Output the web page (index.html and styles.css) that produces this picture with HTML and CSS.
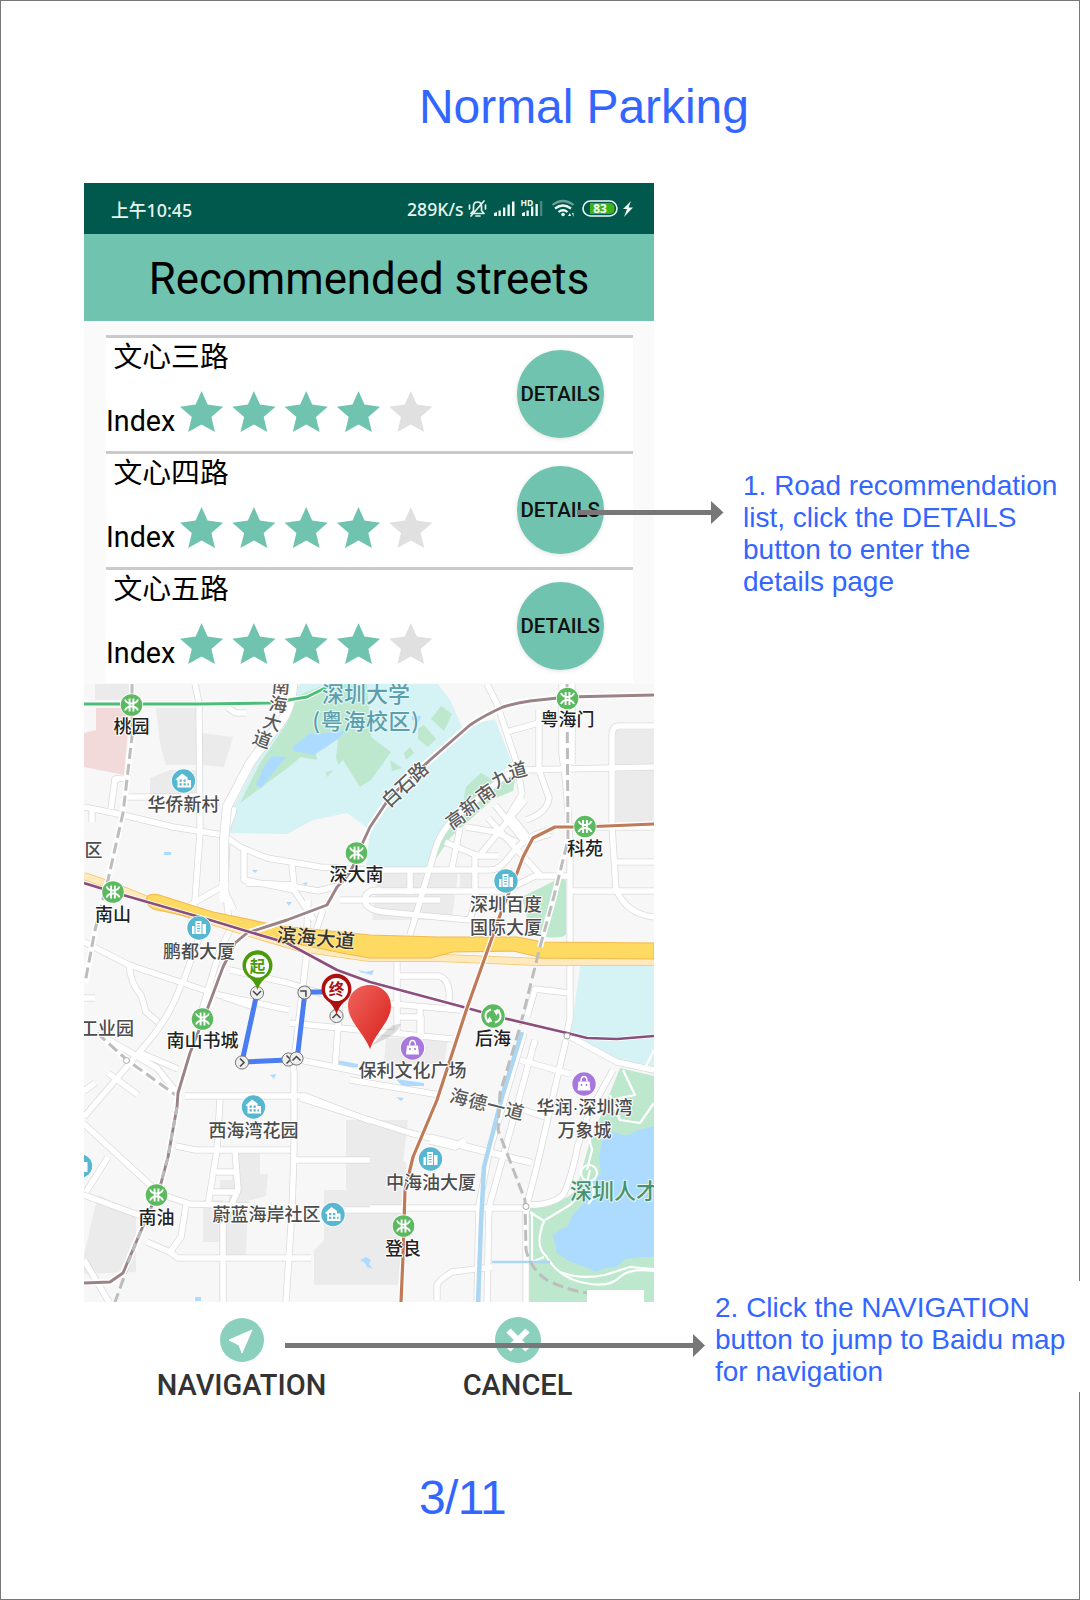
FILE: index.html
```html
<!DOCTYPE html>
<html lang="en">
<head>
<meta charset="utf-8">
<title>Normal Parking</title>
<link rel="stylesheet" href="styles.css">
</head>
<body>
<main class="page">
  <h1 class="title">Normal Parking</h1>

  <section class="phone">
    <div class="status">
      <span class="clock">上午10:45</span>
      <span class="speed">289K/s</span>
      <svg class="status-icons" width="170" height="24" viewBox="466 197 170 24">
        <g fill="none" stroke="#e2f1ea" stroke-width="1.7" stroke-linecap="round" stroke-linejoin="round">
          <path d="M471 213.500h13l-2.500-3v-4q0-4.500-4-4.500t-4 4.500v4zM476 216h4M471 216l13-15M469.500 205v4M485.500 205v4"/>
        </g>
        <g fill="#f0faf5">
          <path d="M494 216v-3l3-1v4zM498.500 216v-5.500h2.300v5.500zM503 216v-8.500h2.300v8.500zM507.500 216v-11.500h2.300v11.500zM512 216v-14.500h2.500v14.500z"/>
          <path d="M522 216v-3l3-1v4zM526.500 216v-5.500h2.300v5.500zM531 216v-9.500h2.300v9.500zM535.500 216v-12h2.300v12z"/>
          <path d="M540 216v-15h2.300v15z" opacity=".3"/>
          <text x="520.500" y="205.500" class="hd">HD</text>
          <circle cx="563" cy="214.500" r="1.800"/>
          <path d="M568 216l2-3 1 3zM572 213h1.500v4z"/>
          <path d="M631 201l-8 8h4l-3 8 9-9.500h-4.500z"/>
        </g>
        <g fill="none" stroke="#f0faf5" stroke-width="2.200">
          <path d="M552.500 205q10.500-8 21 0" opacity=".45"/>
          <path d="M555 208.500q8-6 16 0M558.500 212q4.500-3.500 9 0"/>
        </g>
        <rect x="583" y="201" width="34" height="15" rx="7.500" fill="none" stroke="#f0faf5" stroke-width="1.600"/>
        <path d="M590 203h19q5.500 0 5.500 5.500t-5.500 5.500h-19z" fill="#3cb419"/>
        <text x="600" y="213" class="battery">83</text>
      </svg>
    </div>
    <h2 class="header">Recommended streets</h2>

    <div class="list">
      <article class="row">
        <div class="info">
          <div class="street">文心三路</div>
          <div class="rating"><span>Index</span>
            <svg class="stars" width="252" height="42" viewBox="0 0 252 42"><use href="#star"/><use href="#star" x="52.300"/><use href="#star" x="104.600"/><use href="#star" x="156.900"/><use href="#star" x="209.200" class="off"/></svg>
          </div>
        </div>
        <button class="details">DETAILS</button>
      </article>
      <article class="row">
        <div class="info">
          <div class="street">文心四路</div>
          <div class="rating"><span>Index</span>
            <svg class="stars" width="252" height="42" viewBox="0 0 252 42"><use href="#star"/><use href="#star" x="52.300"/><use href="#star" x="104.600"/><use href="#star" x="156.900"/><use href="#star" x="209.200" class="off"/></svg>
          </div>
        </div>
        <button class="details">DETAILS</button>
      </article>
      <article class="row">
        <div class="info">
          <div class="street">文心五路</div>
          <div class="rating"><span>Index</span>
            <svg class="stars" width="252" height="42" viewBox="0 0 252 42"><use href="#star"/><use href="#star" x="52.300"/><use href="#star" x="104.600"/><use href="#star" x="156.900"/><use href="#star" x="209.200" class="off"/></svg>
          </div>
        </div>
        <button class="details">DETAILS</button>
      </article>
    </div>

    <svg class="map" width="570" height="618" viewBox="84 684 570 618">
      <defs>
        <path id="star" d="M21.600 0L27.600 13.600 43.200 15.800 31.400 26 35 41 21.600 33.400 8.200 41 11.800 26 0 15.800 15.600 13.600z"/>
        <g id="metro">
          <circle r="11.500" fill="#fff"/><circle r="10.800" fill="#5bb960"/>
          <path d="M-6.500-5.500Q-5-1.500 0-1.500T6.500-5.500M-6.500 5.500Q-5 1.500 0 1.500T6.500 5.500M-1.900-6.500v13M1.900-6.500v13" fill="none" stroke="#fff" stroke-width="1.900"/>
        </g>
        <g id="house">
          <circle r="12.500" fill="#fff"/><circle r="11.700" fill="#57b7d0"/>
          <path d="M-8-1.500l6.500-6 5.500 4v2.500h3.500v7.500H-6v-7z" fill="#fff"/>
          <path d="M-4-1.500h2.300v2.300H-4zM0-1.500h2.300v2.300H0zM-4 2.300h2.300v2.300H-4zM0 2.300h2.300v2.300H0zM4 2.300h1.500v2.300H4z" fill="#57b7d0"/>
        </g>
        <g id="tower">
          <circle r="12.500" fill="#fff"/><circle r="11.700" fill="#57b7d0"/>
          <path d="M-7 6v-8h2.500v8zM-3.500 6V-7h6V6zM3.500 6v-10H7V6z" fill="#fff"/>
          <path d="M-2-4.500h3.200M-2-2h3.200M-2 .500h3.200M-2 3h3.200" stroke="#57b7d0"/>
        </g>
        <g id="shop">
          <circle r="12.500" fill="#fff"/><circle r="11.700" fill="#a777dc"/>
          <path d="M-5.500-2.500h11L6.500 6.500h-13z" fill="#fff"/><path d="M-3-2.500q0-5 3-5t3 5" fill="none" stroke="#fff" stroke-width="1.500"/>
          <circle cx="-2.500" cy="1" r="1" fill="#a777dc"/><circle cx="2.500" cy="1" r="1" fill="#a777dc"/>
        </g>
        <g id="turn">
          <circle r="6.600" fill="#eee" stroke="#777" stroke-width="1"/>
          <path d="M-4 2l4-4 4 4" fill="none" stroke="#444" stroke-width="1.500"/>
        </g>
        <g id="network">
          <path d="M84 807l39 8 50 12 50 8 17 12 27 11 53 9 50 3 120 0q10 0 20-14l12-13q10-9 30-13"/>
          <path d="M195 684l4 19 1 130-5 67-4 22"/>
          <path d="M227 840l-2 45 5 45-10 20-18 60"/>
          <path d="M124 797h52l22-1M111 809l4-30 10-1M92 810v12"/>
          <path d="M225 885l-35 20M224 890l10 20M244 850v30l50 10 20 30M246 883l48 2-2-20M296 887l22 4 20-5"/>
          <path d="M226 832l8-22M228 810h8M228 708l8 5h10"/>
          <path d="M84 942l45 23 90 30 70 15M129 965q2 20 12 30l5 17 12 10M182 982q-10 30-30 55l-68 80M224 997l30 10M200 935l-18 50"/>
          <path d="M84 998h11M97 1033l60 35 20 25M138 1052l40 17M108 1073l30 22"/>
          <path d="M230 970l58 13 35 11 47 4M290 1023l80 8M308 900l-2 60-13 110M300 1060l60 12 10 3M340 1000l-5 68M333 945l-20-5 10-30"/>
          <path d="M397 958v75M370 1002l90 8M397 976h42q14 5 9 32M396 1017h25v22M372 1031l80 8M420 1005v34M350 1080l90 15"/>
          <path d="M84 1124l38 35 38 35 30 10 60 2M84 1195l60 22M108 1157l-22 35M176 1146l20 4h94M185 1096l120 0 65 25"/>
          <path d="M220 1100l-3 50-9 55M216 1172h20M211 1192h25M235 1150l3 40-15 35v77M186 1205l-5 32-11 15-23-10M170 1252l8 6h133"/>
          <path d="M294 1070v80l-2 60-6 92M294 1160h76M345 1210h60M300 1098l110 35 60 15 62 15"/>
          <path d="M84 1260l25 42M95 1083l-11 8"/>
          <path d="M370 1208h160M430 1137l100 25M430 1141l25 6 10-7M524 1033l-35 120-10 52-2 97M535 1040l-32 117-14 50-2 95"/>
          <path d="M520 1060l50 14M515 1107l30 10M566 1040l-30 130-10 38v94M526 1205q25 1 37-10 8-15 15-50l10-30 25-45"/>
          <path d="M567 1035l50 27 37 8M570 958v60l-4 20M527 1017l8-28 35 4"/>
          <path d="M437 1300v-15q2-5 15-13l40-5"/>
          <path d="M370 891h135l30-15h35M410 872v22M475 852v50l-5 18M410 935l25-85q5-18 20-32l45-38q10-9 22-10l132-3"/>
          <path d="M452 868l8-40M445 842l33 14h20M466 827l30 5 20 10M480 855l45-55M488 818l55 60M495 805l30 37 25-8M510 815l20 25"/>
          <path d="M487 684l10 20 20 60 5 30-15 25M507 732l35-10M539 710v60l10 28q-2 15-23 22"/>
          <path d="M562 684v70q5 30 8 90v120M572 684v80M654 726h-35q-7 0-7 10v90l4 63q10 25 38 28M570 891h84M613 862h41M566 827h88"/>
          <path d="M380 890q-15 0-15 10t20 12l85 8M340 900h100"/>
        </g>
      </defs>

      <rect x="84" y="684" width="570" height="618" fill="#f7f7f7"/>
      <g fill="#ebebeb">
        <path d="M156 708h41v57h-31l-6-22zM201 733l32 4-9 30-24-2zM150 778l20-8h27v25h-47zM95 700v-16h35v16z"/>
        <path d="M616 730h38v92h-38zM378 872h80l-6 48h-80zM460 872h14v20h-14zM386 1038h62l-4 26h-60zM237 1150h23v24h8l-2 22-18 5-2 54h-27zM220 1180h16v12h-16zM203 1200h20v42h-20zM351 1162h55v28l-8 95h-84v-35l10-10v-50h27zM98 1195l38 17v60l-52 2v-20z"/>
        <path d="M346 1120h62l-10 85h-52z"/>
      </g>
      <path d="M96 708h34l-6 67-40-8v-34l12-3z" fill="#f3dada"/>
      <path d="M300 684h138l12 16 12 27 33-8 17 44-42 37-27 30-13 37h-64l4-37-23-17-34 7-26 14-59-1 2-19 32-64 28-50z" fill="#d5f2f5"/>
      <g fill="#bde8cd">
        <path d="M297 696l30-12h40l4 53 20 15-20 28-11 7-17-27-16 17-4-16-22-4-16 13-18 13-27 20 20-40 27-40z"/>
        <path d="M431 719l10-13 11 8-8 17zM418 729l6-4 12 14-8 8-10-8zM404 753l6-6 4 6-8 7zM390 760l12 8-10 3zM466 787l15-14 13 8 23-12-4 22-20 8-42 38-21 30 6-25 26-32zM522 897l30-15q13-8 14 0v52q-2 5-20 3l-16-8z"/>
      </g>
      <path d="M315 750l10-15 13 5-2 18 4 10-20 6z" fill="#d5f2f5"/>
      <g fill="#addbff">
        <path d="M292 747l17-13 37-3-8 8-12 8-12 8-20-4zM272 756l14 1-25 31-5-3 8-19zM412 716h9l-2 6-7-2zM164 852h7v3h-7zM252 870h6l-3 3zM302 884l5-2v3zM286 902h6l-3 4zM358 970l8 2 8-2-2 5-12-3zM336 1060l22 4v3h-22zM270 1075l6-1-2 5zM360 1260l6-3 5 3-2 4 4 5-6-2-2-4zM195 1297h6v4h-6zM396 1079l28 4v3h-22zM396 1097l8 1-3 3z"/>
      </g>
      <path d="M580 968q0-5 5-5h69v112l-37-14-47-24z" fill="#d5f2f5"/>
      <path d="M620 1068l34 8v226H528v-94q38-5 48-18l13-45z" fill="#bde8cd"/>
      <path d="M603 1137q8-7 16-3 10 3 17-3l18-5v131l-12 0-16 2-10 8-12 1-7 4-12-5-16-6-12-8-4-18 8-6 7-3 5-12 10-10-4-10 8-12 14-8-2-16z" fill="#addbff"/>

      <g fill="none" stroke-linejoin="round">
        <use href="#network" stroke="#dadada" stroke-width="7"/>
        <use href="#network" stroke="#fff" stroke-width="5.500"/>
        <path d="M293 684q-2 30-18 45l-25 34-23 44-3 35v40" stroke="#dadada" stroke-width="10"/>
        <path d="M293 684q-2 30-18 45l-25 34-23 44-3 35v60" stroke="#fff" stroke-width="8.500"/>
        <path d="M530 1212l14 9q-10 25 2 35 15 25 45 28 20 3 30-8 10-8 33-5M545 1220l25-15 15-15 5-20M532 1212v50l12-5M560 1272q20 8 45 3l25-8 24 2M587 1130l5 20-5 20M623 1070l12 25-25 5M610 1095l10 25 20 3 14-20M590 1180q8 15-2 24M654 1050l-10 20" stroke="#fff" stroke-width="2.200"/>
        <circle cx="589" cy="1173" r="8" stroke="#fff" stroke-width="2.200"/>
        <path d="M522 1032l-20 65-18 70-3 56-3 79" stroke="#acd7f3" stroke-width="4.500"/>
        <path d="M492 1262h58" stroke="#acd7f3" stroke-width="2.500"/>

        <path d="M84 876l26 9 50 20 80 25 60 18 70 10h70l100 4h114" stroke="#f2c66b" stroke-width="8"/>
        <path d="M84 876l26 9 50 20 80 25 60 18 70 10h70l100 4h114" stroke="#ffe9bd" stroke-width="6.500"/>
        <path d="M147 897q3-4 12-2l54 17 67 14 90 9 67 2h80l26 5 111 1v16l-111-1-30-7-60 1-23 6-60 0-23-4-54-11-80-21-60-13q-8-5-6-12z" fill="#ffda62" stroke="#f1ba4e" stroke-width="1.200"/>

        <g stroke="#fff" stroke-width="6"><path d="M132 684v53l-9 76-15 67-13 50-10 53M97 1033l30 27 50 36"/><path d="M567 684l1 156-15 60-13 47"/></g>
        <g stroke="#bdbdbd" stroke-width="3" stroke-dasharray="11 5">
          <path d="M132 684v53l-9 76-15 67-13 50-10 53M97 1033l30 27 50 36M140 1233l-25 69"/>
          <path d="M567 684l1 156-15 60-13 47-20 80-20 66-2 37 27 70 1 50q5 20 21 30 20 10 40 13"/>
        </g>
        <path d="M84 704h116l70-1 37-6 20-10" stroke="#fff" stroke-width="5"/>
        <path d="M84 704h116l70-1 37-6 20-10" stroke="#4cbd77" stroke-width="3"/>
        <path d="M654 695l-87 2-37 4q-15 2-27 6-18 8-33 18l-40 35-40 37-20 30-13 28q-4 18-20 32l-10 18-40 15-40 13-12 10-12 24-16 43-17 43-12 40-1 14-9 50-8 30-20 46-17 40-13 9-26 1" stroke="#fff" stroke-width="6.500"/>
        <path d="M654 695l-87 2-37 4q-15 2-27 6-18 8-33 18l-40 35-40 37-20 30-13 28q-4 18-20 32l-10 18-40 15-40 13-12 10-12 24-16 43-17 43-12 40-1 14-9 50-8 30-20 46-17 40-13 9-26 1" stroke="#9b8387" stroke-width="2.900"/>
        <path d="M177 1107l-9 50-8 30-20 46-12 30" stroke="#bbb" stroke-width="3" stroke-dasharray="8 5"/>
        <path d="M84 883l39 12 87 25 33 10 44 13 50 27 33 12 97 26 36 10 64 15 20 5 30 1 37-3" stroke="#fff" stroke-width="4"/>
        <path d="M84 883l39 12 87 25 33 10 44 13 50 27 33 12 97 26 36 10 64 15 20 5 30 1 37-3" stroke="#8a4f7d" stroke-width="2.700"/>
        <path d="M654 824l-71 3h-28l-22 11-10 19-6 16-14 34-36 101-30 92-24 57-8 33-2 67-2 45" stroke="#fff" stroke-width="5.500"/>
        <path d="M654 824l-71 3h-28l-22 11-10 19-6 16-14 34-36 101-30 92-24 57-8 33-2 67-2 45" stroke="#bf7a58" stroke-width="3.200"/>
        <path d="M257 993l-15 69 45-2 10 0 8-68 22 0" stroke="#4a7df2" stroke-width="5"/>
      </g>
      <g fill="#fff" stroke="#aaa"><circle cx="126.500" cy="1060.500" r="3"/><circle cx="567" cy="1036" r="3"/><circle cx="526" cy="1206.500" r="3"/></g>
      <path d="M587 1302v-10q0-2 2-2h55v12z" fill="#fff"/>

      <use href="#metro" x="131.500" y="705"/><use href="#metro" x="567.500" y="698.500"/><use href="#metro" x="585" y="826.500"/>
      <use href="#metro" x="356.500" y="853"/><use href="#metro" x="113" y="892"/><use href="#metro" x="202.500" y="1019"/>
      <use href="#metro" x="156.500" y="1195"/><use href="#metro" x="403.500" y="1226"/>
      <circle cx="493" cy="1016" r="12.500" fill="#fff"/><circle cx="493" cy="1016" r="11.700" fill="#5bb960"/>
      <path d="M491 1009.500q-6 2-5.500 7 .500 4 4 6M495 1022.500q6-2 5.500-7-.500-4-4-6" fill="none" stroke="#fff" stroke-width="2"/>
      <path d="M486 1022.500l6.500-1-3-5zM500 1009.500l-6.500 1 3 5z" fill="#fff"/>
      <use href="#house" x="183.500" y="781"/><use href="#house" x="253.500" y="1107"/><use href="#house" x="333" y="1214.500"/>
      <use href="#tower" x="506" y="881"/><use href="#tower" x="199" y="928"/><use href="#tower" x="430.500" y="1159"/><use href="#tower" x="80.500" y="1166"/>
      <use href="#shop" x="412.500" y="1048"/><use href="#shop" x="584" y="1084"/>

      <g class="label station">
        <text x="131.500" y="733">桃园</text><text x="567.500" y="726">粤海门</text><text x="585" y="855">科苑</text><text x="356.500" y="881">深大南</text>
        <text x="113" y="920.500">南山</text><text x="202.500" y="1047">南山书城</text><text x="493" y="1045">后海</text><text x="156.500" y="1223.500">南油</text><text x="403" y="1254.500">登良</text>
      </g>
      <g class="label">
        <text x="183.500" y="810.500">华侨新村</text><text x="93.500" y="857">区</text><text x="506" y="910.500">深圳百度</text><text x="506" y="933.500">国际大厦</text>
        <text x="199" y="957.500">鹏都大厦</text><text x="107" y="1034.500">工业园</text><text x="412.500" y="1077">保利文化广场</text><text x="253.500" y="1136.500">西海湾花园</text>
        <text x="584.500" y="1114">华润<tspan class="dot">·</tspan>深圳湾</text><text x="584.500" y="1136.500">万象城</text><text x="431" y="1188.500">中海油大厦</text><text x="266.500" y="1220.500">蔚蓝海岸社区</text>
      </g>
      <g class="label road">
        <text transform="translate(281 687) rotate(5)" y="6">南</text><text transform="translate(278 705) rotate(8)" y="6">海</text><text transform="translate(272 723) rotate(15)" y="6">大</text><text transform="translate(262 740) rotate(20)" y="6">道</text>
        <text transform="translate(405.500 785) rotate(-43)" y="6">白石路</text>
        <text transform="translate(456 820) rotate(-35)" y="6">高</text><text transform="translate(470 807) rotate(-38)" y="6">新</text><text transform="translate(486 794) rotate(-35)" y="6">南</text><text transform="translate(501 779) rotate(-30)" y="6">九</text><text transform="translate(518 771) rotate(-15)" y="6">道</text>
        <text class="wide" transform="translate(487 1105) rotate(14)" y="6">海德一道</text>
      </g>
      <text class="label highway" transform="translate(316 938) rotate(5)" y="7">滨海大道</text>
      <g class="label campus"><text x="366" y="702">深圳大学</text><text x="366" y="729" class="wide">(粤海校区)</text></g>
      <text class="label park" x="570" y="1199">深圳人才</text>

      <use href="#turn" transform="translate(257 993) rotate(180)"/><use href="#turn" transform="translate(242 1062.500) rotate(90)"/><use href="#turn" transform="translate(288.500 1059.500) rotate(90)"/>
      <use href="#turn" x="296.500" y="1058.500"/><use href="#turn" transform="translate(304.500 992.500) rotate(45)"/><use href="#turn" x="336.500" y="1016"/>
      <path d="M371 1046l14-14q8-9 16-8-4 10-16 15z" fill="#777" opacity=".25"/>
      <path d="M257.500 990q-3-9-10-13.500a15 15 0 1 1 20 0q-7 4.500-10 13.500z" fill="#4c9a0a"/><circle cx="257.500" cy="966" r="11.500" fill="#fff"/><text class="pin start" x="257.500" y="971.700">起</text>
      <path d="M336.500 1014q-3-9-10-14a15 15 0 1 1 20 0q-7 5-10 14z" fill="#b00f0f"/><circle cx="336.500" cy="989.500" r="11.500" fill="#fff"/><text class="pin end" x="336.500" y="995.200">终</text>
      <linearGradient id="red" x1="0" y1="0" x2="1" y2="1"><stop offset="0" stop-color="#f0645c"/><stop offset="1" stop-color="#d8201c"/></linearGradient>
      <path d="M369.500 985c12 0 21.500 9 21.500 21 0 15-15 26-21 43-6-16-22-28-22-43 0-12 9.500-21 21.500-21z" fill="url(#red)"/>
    </svg>

    <footer class="actions">
      <div class="action">
        <svg width="46" height="46" viewBox="-23 -23 46 46"><circle r="22" fill="#8ad0bd"/><path d="M10-10L0 13l-3-8-10-5z" fill="#fff" stroke="#fff" stroke-linejoin="round"/></svg>
        <span>NAVIGATION</span>
      </div>
      <div class="action cancel">
        <svg width="46" height="46" viewBox="-23 -23 46 46"><circle r="23" fill="#8ad0bd"/><path d="M-9.500-9.500L9.500 9.500M9.500-9.500L-9.500 9.500" stroke="#fff" stroke-width="6"/></svg>
        <span>CANCEL</span>
      </div>
    </footer>
  </section>

  <p class="counter">3/11</p>

  <svg class="arrow arrow-list" width="147" height="24" viewBox="0 0 147 24"><path d="M0 9h134V0l12.500 11.500L134 23v-9H0z" fill="#777"/></svg>
  <p class="note note-list">1. Road recommendation<br>list, click the DETAILS<br>button to enter the<br>details page</p>
  <svg class="arrow arrow-nav" width="420" height="24" viewBox="0 0 420 24"><path d="M0 9h408V0l12 11.500L408 23v-9H0z" fill="#777"/></svg>
  <p class="note note-nav">2. Click the NAVIGATION<br>button to jump to Baidu map<br>for navigation</p>
</main>
</body>
</html>
```
FILE: styles.css
```css
* { box-sizing: border-box; }

body {
  margin: 0;
  background: #fff;
  font-family: Roboto, "Noto Sans CJK SC", sans-serif;
}

h1, h2, p { margin: 0; font-weight: 400; }

.page {
  position: relative;
  width: 1080px;
  height: 1600px;
  border: 1px solid #777;
  padding: 78px 0 0 83px;
}

.title, .counter, .note {
  color: #36f;
  font-family: "Liberation Sans", Arial, sans-serif;
}

.title {
  padding-left: 335px;
  height: 104px;
  font-size: 48px;
  letter-spacing: -0.07px;
  line-height: 55px;
}

.phone { width: 570px; }

.status {
  display: flex;
  align-items: center;
  height: 51px;
  padding: 0 14px 0 27px;
  background: #00594c;
  color: #e8f5ef;
  font-family: "Noto Sans", "Noto Sans CJK SC", sans-serif;
  font-weight: 500;
  white-space: nowrap;
}

.clock { width: 296px; font-size: 17.8px; }
.speed { width: 59px; font-size: 17.6px; }
.status-icons { flex: none; }
.hd { font: 700 8.500px "Noto Sans", sans-serif; }
.battery { fill: #fff; font: 700 12px "Noto Sans", sans-serif; text-anchor: middle; }

.header {
  height: 87px;
  background: #70c3af;
  color: #000;
  font-size: 43.800px;
  line-height: 91px;
  text-align: center;
}

.list {
  height: 363px;
  padding: 14px 21px 0 22px;
  background: #fafafa;
}

.row {
  display: flex;
  justify-content: space-between;
  height: 116px;
  padding-right: 29px;
  border-top: 3px solid #cacaca;
  background: #fff;
}

.street {
  height: 53px;
  padding-left: 7.500px;
  font-size: 28.800px;
  line-height: 38px;
}

.rating {
  display: flex;
  height: 44px;
  font-size: 28.700px;
}

.rating span { width: 74px; padding-top: 13px; line-height: 34px; }
.stars { fill: #70c3af; overflow: visible; }
.off { fill: #e0e0e0; }

.details {
  flex: none;
  width: 87.500px;
  height: 87.500px;
  margin-top: 12px;
  padding: 1px 0 0;
  border: 0;
  border-radius: 50%;
  background: #70c3af;
  box-shadow: 0 1px 4px #0002;
  color: #111;
  font: 500 20.500px Roboto, sans-serif;
}

.map { display: block; }

.label {
  fill: #4c4c4c;
  stroke: #fff;
  stroke-width: 2px;
  paint-order: stroke;
  stroke-linejoin: round;
  font: 500 18px "Noto Sans CJK SC", sans-serif;
  text-anchor: middle;
}
.station { fill: #222; }
.road { fill: #5c5c5c; font-size: 18.500px; }
.highway { fill: #333; stroke: #ffe9b0; font-size: 19.500px; }
.campus { fill: #5c9fac; stroke: #e5f8fa; font-size: 22px; }
.park { fill: #479272; stroke: #e5f6ee; font-size: 22px; text-anchor: start; }
.dot { font-family: "Liberation Sans", sans-serif; }
.wide { letter-spacing: 0.6px; }
.pin { font: 700 15.500px "Noto Sans CJK SC", sans-serif; text-anchor: middle; }
.start { fill: #4c9a0a; }
.end { fill: #b00f0f; }

.actions {
  display: flex;
  height: 104px;
  padding: 15px 60px 0 73px;
  justify-content: space-between;
}

.action {
  display: flex;
  flex-direction: column;
  align-items: center;
  width: 169px;
  color: #333;
  font-size: 29px;
  font-weight: 500;
  line-height: 34px;
}
.action span { margin-top: 5px; }
.cancel { width: 153px; }

.counter {
  padding: 64px 0 0 335px;
  font-size: 48px;
  letter-spacing: -0.7px;
  line-height: 55px;
}

/* Callouts laid over the page */
.arrow, .note { position: absolute; }
.arrow-list { left: 576px; top: 500px; }
.arrow-nav { left: 284px; top: 1333px; }

.note { font-size: 28px; line-height: 32px; white-space: nowrap; }
.note-list { left: 742px; top: 469px; }
.note-nav {
  left: 714px;
  top: 1280px;
  width: 370px;
  height: 111px;
  padding-top: 11px;
  background: #fff;
}
```
